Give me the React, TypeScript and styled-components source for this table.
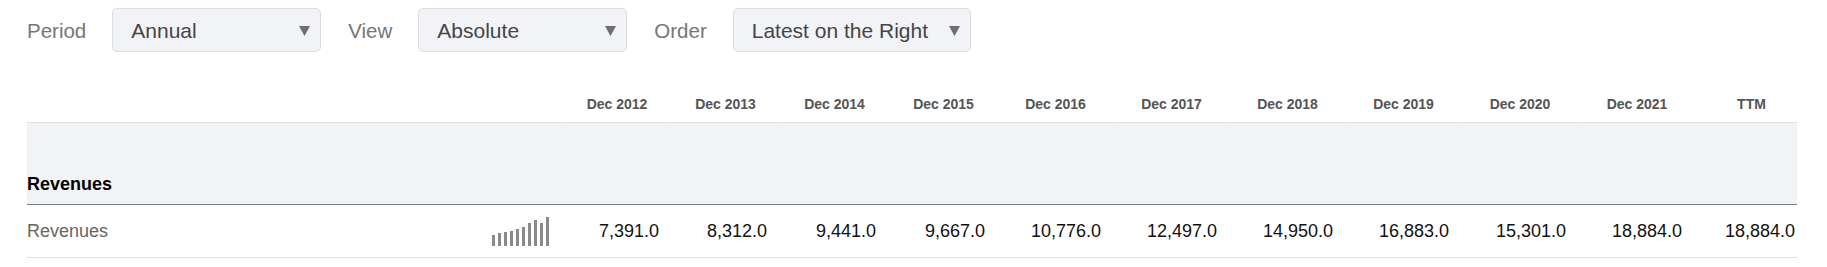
import React from "react";
import styled, { createGlobalStyle } from "styled-components";

const GlobalStyle = createGlobalStyle`
  * { box-sizing: border-box; }
  html, body { margin: 0; padding: 0; background: #fff; }
  body { font-family: "Liberation Sans", Arial, sans-serif; }
`;

const Page = styled.div`
  padding: 8px 0 0 27px;
  width: 1797px;
`;

const Toolbar = styled.div`
  display: flex;
  align-items: center;
  gap: 27px;
  height: 44px;
`;

const Field = styled.div`
  display: flex;
  align-items: center;
`;

const FieldLabel = styled.span`
  font-size: 20.5px;
  color: #767676;
  margin-right: 26px;
  padding-top: 2px;
`;

const Select = styled.div<{ $width?: number }>`
  display: flex;
  align-items: center;
  justify-content: space-between;
  height: 44px;
  ${(p) => (p.$width ? `width: ${p.$width}px;` : "")}
  padding: 1px 10px 0 18px;
  background: #f2f3f7;
  border: 1px solid #dcdde2;
  border-radius: 5px;
  font-size: 21px;
  color: #454545;
`;

const SelectText = styled.span`
  margin-right: 21px;
`;

const Arrow = () => (
  <svg width="11" height="10" viewBox="0 0 11 10">
    <polygon points="0,0 11,0 5.5,10" fill="#6e6e6e" />
  </svg>
);

const TableClip = styled.div`
  margin-top: 34px;
  width: 1770px;
  overflow: hidden;
`;

const COLS = "536px 109px 108px 109px 109px 116px 116px 116px 116px 117px 116px 113px";

const Row = styled.div`
  display: grid;
  grid-template-columns: ${COLS};
  width: 1781px;
`;

const HeadCell = styled.div<{ $split?: boolean }>`
  padding: 8px 13px;
  line-height: 20px;
  height: 37px;
  font-size: 14px;
  font-weight: bold;
  color: #555;
  text-align: center;
  white-space: nowrap;
  border-bottom: 1px solid #dedfe2;
  ${(p) => (p.$split ? "border-right: 1px solid #fff;" : "")}
`;

const Section = styled.div`
  width: 1781px;
  background: #f2f3f7;
  border-bottom: 1px solid #7d8288;
  padding: 49px 0 8px 0;
  line-height: 24px;
  font-size: 18px;
  font-weight: bold;
  color: #000;
`;

const DataCell = styled.div`
  height: 53px;
  display: flex;
  align-items: center;
  justify-content: flex-end;
  padding: 0 13px;
  line-height: 24px;
  font-size: 18px;
  color: #111;
  border-bottom: 1px solid #dedfe2;
  white-space: nowrap;
`;

const LabelCell = styled(DataCell)`
  justify-content: space-between;
  padding: 0 14px 0 0;
  color: #666;
`;

const headers = [
  "Dec 2012",
  "Dec 2013",
  "Dec 2014",
  "Dec 2015",
  "Dec 2016",
  "Dec 2017",
  "Dec 2018",
  "Dec 2019",
  "Dec 2020",
  "Dec 2021",
  "TTM",
];
const splitAfter = new Set([0, 1, 4, 5, 6, 7, 8]);
const values = [7391, 8312, 9441, 9667, 10776, 12497, 14950, 16883, 15301, 18884, 18884];

const fmt = (n: number) =>
  n.toLocaleString("en-US", { minimumFractionDigits: 1, maximumFractionDigits: 1 });

const Sparkline = ({ data }: { data: number[] }) => {
  const max = Math.max(...data);
  const h = 30;
  return (
    <svg width={57} height={h} viewBox={`0 0 57 ${h}`}>
      {data.map((v, i) => {
        const bh = Math.round((v / max) * 29);
        return <rect key={i} x={i * 6} y={h - bh} width={3} height={bh} fill="#8a8a8a" />;
      })}
    </svg>
  );
};

export default function App() {
  return (
    <>
      <GlobalStyle />
      <Page>
        <Toolbar>
          <Field>
            <FieldLabel>Period</FieldLabel>
            <Select $width={209}>
              <SelectText>Annual</SelectText>
              <Arrow />
            </Select>
          </Field>
          <Field>
            <FieldLabel>View</FieldLabel>
            <Select $width={209}>
              <SelectText>Absolute</SelectText>
              <Arrow />
            </Select>
          </Field>
          <Field>
            <FieldLabel>Order</FieldLabel>
            <Select>
              <SelectText>Latest on the Right</SelectText>
              <Arrow />
            </Select>
          </Field>
        </Toolbar>
        <TableClip>
          <Row>
            <HeadCell $split />
            {headers.map((h, i) => (
              <HeadCell key={h} $split={splitAfter.has(i)}>
                {h}
              </HeadCell>
            ))}
          </Row>
          <Section>Revenues</Section>
          <Row>
            <LabelCell>
              <span>Revenues</span>
              <Sparkline data={values.slice(0, 10)} />
            </LabelCell>
            {values.map((v, i) => (
              <DataCell key={i}>{fmt(v)}</DataCell>
            ))}
          </Row>
        </TableClip>
      </Page>
    </>
  );
}
